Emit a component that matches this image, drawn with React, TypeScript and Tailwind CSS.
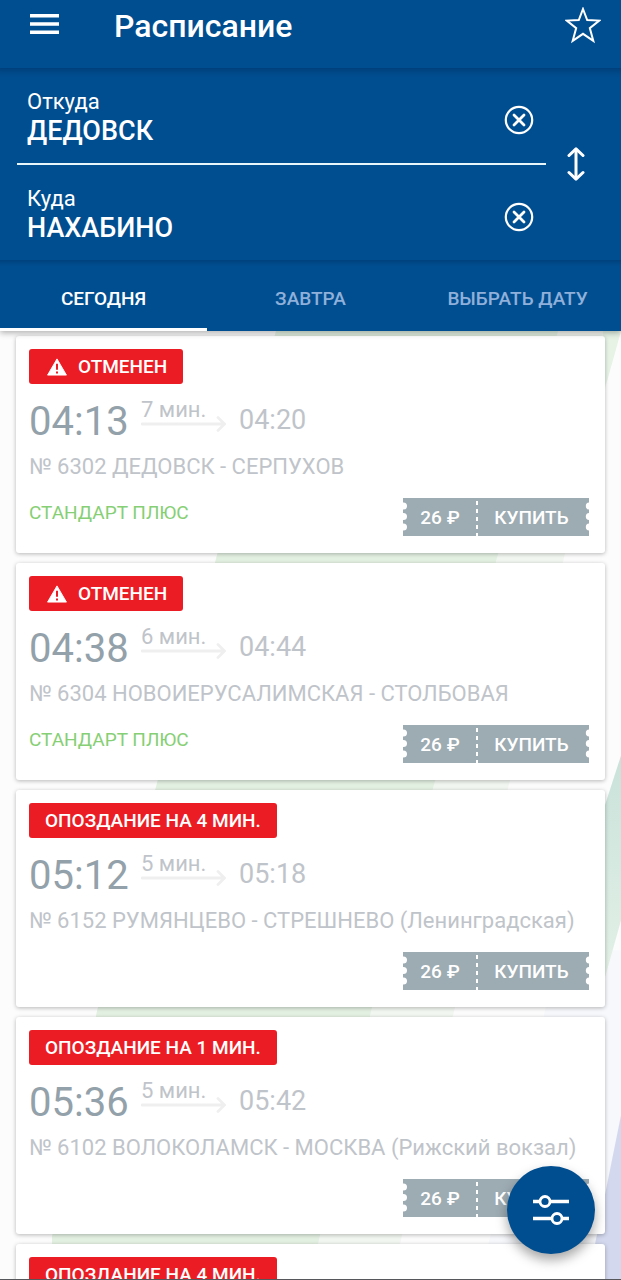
import { useState } from 'react'

type Train = {
  status: string
  cancelled?: boolean
  departure: string
  duration: string
  arrival: string
  route: string
  tariff?: string
  price: string
}

const trains: Train[] = [
  { status: 'ОТМЕНЕН', cancelled: true, departure: '04:13', duration: '7 мин.', arrival: '04:20', route: '№ 6302 ДЕДОВСК - СЕРПУХОВ', tariff: 'СТАНДАРТ ПЛЮС', price: '26 ₽' },
  { status: 'ОТМЕНЕН', cancelled: true, departure: '04:38', duration: '6 мин.', arrival: '04:44', route: '№ 6304 НОВОИЕРУСАЛИМСКАЯ - СТОЛБОВАЯ', tariff: 'СТАНДАРТ ПЛЮС', price: '26 ₽' },
  { status: 'ОПОЗДАНИЕ НА 4 МИН.', departure: '05:12', duration: '5 мин.', arrival: '05:18', route: '№ 6152 РУМЯНЦЕВО - СТРЕШНЕВО (Ленинградская)', price: '26 ₽' },
  { status: 'ОПОЗДАНИЕ НА 1 МИН.', departure: '05:36', duration: '5 мин.', arrival: '05:42', route: '№ 6102 ВОЛОКОЛАМСК - МОСКВА (Рижский вокзал)', price: '26 ₽' },
  { status: 'ОПОЗДАНИЕ НА 4 МИН.', departure: '05:50', duration: '6 мин.', arrival: '05:56', route: '№ 6154 РУМЯНЦЕВО - СТРЕШНЕВО (Ленинградская)', price: '26 ₽' },
]

const tabs = ['СЕГОДНЯ', 'ЗАВТРА', 'ВЫБРАТЬ ДАТУ']

const Backdrop = () => (
  <svg className="absolute inset-0 h-full w-full" viewBox="0 0 621 949" preserveAspectRatio="none" aria-hidden="true">
    <defs>
      <linearGradient id="teal" x1="0" y1="0" x2="0" y2="1">
        <stop offset="0" stopColor="#c9e2da" />
        <stop offset="1" stopColor="#e6f2e8" />
      </linearGradient>
    </defs>
    <rect width="621" height="949" fill="#fcfcfd" />
    <path d="M560 620 L545 680 L480 949 H621 V620 Z" fill="#f7f8fb" />
    <path d="M276 0 H621 L607 50 L564 227 L454 681 L392 949 H52 V907 L97 681 Z" fill="#f3f7f1" />
    <path d="M276 0 H558 L497 227 L371 681 L310 949 H52 V907 L97 681 Z" fill="#e3f1e2" />
    <path d="M558 0 H621 L607 50 L603 60 V0 Z" fill="#e6f3e5" />
    <path d="M621 425 L600 490 V665 L621 590 Z" fill="url(#teal)" />
    <path d="M621 785 L588 949 H621 Z" fill="#d3d8ee" />
  </svg>
)

type FieldProps = {
  id: string
  label: string
  value: string
  onChange: (value: string) => void
}

const StationField = (props: FieldProps) => (
  <div className="flex items-center pt-[22px] pr-3 pb-[15px] pl-[10px]">
    <div className="flex min-w-0 flex-1 flex-col">
      <label htmlFor={props.id} className="text-[22px] leading-6">{props.label}</label>
      <input
        id={props.id}
        value={props.value}
        onChange={(e) => props.onChange(e.target.value)}
        className="h-[34px] w-full bg-transparent text-[27px] font-medium outline-none"
      />
    </div>
    <button type="button" aria-label="Очистить" onClick={() => props.onChange('')} className="pt-0.5">
      <svg width="30" height="30" viewBox="0 0 30 30" fill="none" stroke="white" strokeLinecap="round">
        <circle cx="15" cy="15" r="13.2" strokeWidth="2.2" />
        <path d="M10 10 L20 20 M20 10 L10 20" strokeWidth="2.8" />
      </svg>
    </button>
  </div>
)

const Notches = (props: { side: 'left' | 'right' }) => (
  <svg width="4" height="38" viewBox="0 0 4 38" fill="white" className="shrink-0" aria-hidden="true">
    {[8, 18.5, 29].map((y) => (
      <circle key={y} cx={props.side === 'left' ? 0.4 : 4.4} cy={y} r="3.6" />
    ))}
  </svg>
)

const TicketButton = (props: { price: string }) => (
  <button className="flex h-[38px] w-[186px] items-center bg-[#9dabb2] text-[19px] font-medium text-white">
    <Notches side="left" />
    <span className="w-[69px] pt-0.5 pr-[3px] text-center">{props.price}</span>
    <svg width="2" height="38" viewBox="0 0 2 38" aria-hidden="true">
      <path d="M1 3 V38" stroke="white" strokeWidth="2" strokeDasharray="4 4" />
    </svg>
    <span className="flex-1 pt-0.5 text-center">КУПИТЬ</span>
    <Notches side="right" />
  </button>
)

const TrainCard = (props: { train: Train }) => {
  const { train } = props

  return (
    <li className="shrink-0 rounded-[3px] bg-white px-[13px] pt-[13px] pb-[17px] shadow-[0_1px_4px_rgba(0,0,0,0.28)]">
      <div className="flex">
        <span className="flex h-[35px] items-center gap-[9px] rounded-[3px] bg-[#ec1c24] px-4 pt-0.5 text-[19px] font-medium text-white">
          {train.cancelled && (
            <svg width="24" height="20" viewBox="0 0 24 20" className="pb-0.5" aria-hidden="true">
              <path d="M12 1 L22.5 19 H1.5 Z" fill="white" stroke="white" strokeLinejoin="round" />
              <path d="M12 6.5 V13 M12 15 V17.2" stroke="#ec1c24" strokeWidth="2.2" />
            </svg>
          )}
          {train.status}
        </span>
      </div>
      <div className="mt-[14px] flex h-12 text-[#bfc4ca]">
        <time className="w-[100px] text-[40px] leading-12 text-[#93a1aa]">{train.departure}</time>
        <div className="ml-3 flex w-[85px] flex-col pt-0.5">
          <span className="text-[22px] leading-5">{train.duration}</span>
          <svg width="85" height="16" viewBox="0 0 85 16" fill="none" stroke="#efefef" strokeWidth="2.8" strokeLinecap="round" className="-mt-1" aria-hidden="true">
            <path d="M1 8 H83 M77 1.5 L83.5 8 L77 14.5" />
          </svg>
        </div>
        <time className="ml-[13px] text-[27px] leading-11">{train.arrival}</time>
      </div>
      <p className="mt-[7px] text-[22px] leading-7 text-[#bfc4ca]">{train.route}</p>
      <div className="mt-[17px] flex justify-between pr-[3px]">
        <span className="text-[19px] leading-[30px] text-[#86cf74]">{train.tariff}</span>
        <TicketButton price={train.price} />
      </div>
    </li>
  )
}

const App = () => {
  const [from, setFrom] = useState('ДЕДОВСК')
  const [to, setTo] = useState('НАХАБИНО')
  const [active, setActive] = useState(0)

  const swap = () => {
    setFrom(to)
    setTo(from)
  }

  return (
    <div className="flex h-screen flex-col overflow-hidden border-b border-[#55575b] bg-white font-[Roboto,sans-serif]">
      <div className="relative z-10 bg-[#004e90] text-white shadow-[0_2px_6px_rgba(0,0,0,0.3)]">
        <header className="flex h-[68px] items-center pr-5 pb-4 pl-[30px]">
          <button aria-label="Меню">
            <svg width="30" height="24" viewBox="0 0 30 24" fill="white">
              <path d="M0 0 H29 V3.4 H0 Z M0 8.3 H29 V11.7 H0 Z M0 16.6 H29 V20 H0 Z" />
            </svg>
          </button>
          <h1 className="ml-[54px] flex-1 text-[32px] leading-10 font-medium">Расписание</h1>
          <button aria-label="В избранное">
            <svg width="36" height="38" viewBox="0 0 36 38" fill="none" stroke="white" strokeWidth="2">
              <path d="M18 2 L22.2 13.1 L34.3 13.6 L24.8 21.1 L28.3 33.8 L18 26.8 L7.7 33.8 L11.2 21.1 L1.7 13.6 L13.8 13.1 Z" />
            </svg>
          </button>
        </header>

        <form className="flex pl-[17px] shadow-[inset_0_9px_6px_-6px_#003f78]" onSubmit={(e) => e.preventDefault()}>
          <div className="flex-1">
            <div className="border-b-2 border-[#e6f6fb]">
              <StationField id="from" label="Откуда" value={from} onChange={setFrom} />
            </div>
            <StationField id="to" label="Куда" value={to} onChange={setTo} />
          </div>
          <div className="flex w-[75px] items-center justify-center pr-4">
            <button type="button" aria-label="Поменять местами" onClick={swap}>
              <svg width="18" height="36" viewBox="0 0 18 36" fill="none" stroke="white" strokeWidth="3">
                <path d="M9 3 V33" />
                <path d="M2 9.5 L9 2.8 L16 9.5 M2 26.5 L9 33.2 L16 26.5" strokeLinecap="round" strokeLinejoin="round" />
              </svg>
            </button>
          </div>
        </form>

        <nav className="grid h-[71px] grid-cols-3 shadow-[inset_0_7px_5px_-5px_#003f78]">
          {tabs.map((tab, i) => (
            <button
              key={tab}
              onClick={() => setActive(i)}
              className={
                i === active
                  ? 'border-b-3 border-white pt-[10px] text-[19px] font-medium text-white'
                  : 'border-b-3 border-transparent pt-[10px] text-[19px] font-medium text-[#8fb0da]'
              }
            >
              {tab}
            </button>
          ))}
        </nav>
      </div>

      <main className="relative min-h-0 flex-1">
        <Backdrop />
        <ul className="relative flex h-full flex-col gap-[10px] overflow-y-auto px-4 pt-[5px] [scrollbar-width:none]">
          {trains.map((train) => (
            <TrainCard key={train.route} train={train} />
          ))}
        </ul>
      </main>

      <button
        aria-label="Фильтры"
        className="fixed right-[26px] bottom-[26px] z-20 flex size-[88px] items-center justify-center rounded-full bg-[#004e90] shadow-[0_6px_12px_rgba(0,0,0,0.35)]"
      >
        <svg width="38" height="32" viewBox="0 0 38 32" fill="#004e90" stroke="white" strokeWidth="3.4">
          <path d="M1 7.5 H37 M1 24.5 H37" />
          <circle cx="13" cy="7.5" r="5" strokeWidth="2.8" />
          <circle cx="25" cy="24.5" r="5" strokeWidth="2.8" />
        </svg>
      </button>
    </div>
  )
}

export default App
